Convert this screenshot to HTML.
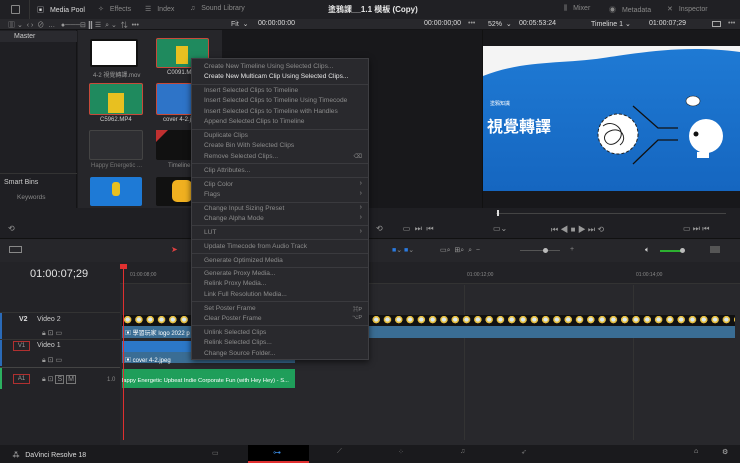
<!DOCTYPE html>
<html><head><meta charset="utf-8"><style>
*{margin:0;padding:0;box-sizing:border-box}
body{width:740px;height:463px;overflow:hidden;background:#1c1c1f;font-family:"Liberation Sans","Noto Sans CJK TC",sans-serif;color:#c8c8c8;position:relative;font-size:7px}
.a{position:absolute}
.t{position:absolute;white-space:nowrap}
.mi{position:absolute;left:12px;white-space:nowrap;color:#8c8c8c;font-size:6.6px}
.sep{position:absolute;left:0;right:0;height:1px;background:#3a3a3e}
.arr{position:absolute;right:6px;color:#8c8c8c;font-size:7px}
.th{position:absolute;border-radius:2px}
.lab{position:absolute;font-size:6px;color:#9a9a9a;white-space:nowrap}
</style></head><body>
<div class="a" style="left:0;top:0;width:740px;height:19px;background:#202024"></div>
<div class="a" style="left:11px;top:5px;width:9px;height:9px;border:1px solid #888;border-radius:1px"></div>
<div class="a" style="left:29px;top:0;width:1px;height:19px;background:#333"></div>
<div class="t" style="left:37px;top:5px;color:#ddd">▣ <span style="margin-left:4px">Media Pool</span></div>
<div class="t" style="left:98px;top:5px;color:#888">✧ <span style="margin-left:4px">Effects</span></div>
<div class="t" style="left:145px;top:5px;color:#888">☰ <span style="margin-left:4px">Index</span></div>
<div class="t" style="left:190px;top:5px;color:#888">♫ <span style="margin-left:4px">Sound Library</span></div>
<div class="t" style="left:328px;top:4px;color:#e8e8e8;font-size:8px;font-weight:bold">塗鴉課__1.1 模板 (Copy)</div>
<div class="t" style="left:564px;top:5px;color:#888">⫼ <span style="margin-left:4px">Mixer</span></div>
<div class="t" style="left:609px;top:5px;color:#888">◉ <span style="margin-left:4px">Metadata</span></div>
<div class="t" style="left:667px;top:5px;color:#888">✕ <span style="margin-left:4px">Inspector</span></div>
<div class="a" style="left:0;top:19px;width:740px;height:11px;background:#28282c;border-bottom:1px solid #141416"></div>
<div class="t" style="left:8px;top:20px;color:#999">▥ ⌄ &nbsp;‹ › &nbsp;⊘ &nbsp;…&nbsp;&nbsp;&nbsp;●───⊟ <b style="color:#ddd">⣿</b> ☰ &nbsp;⌕ ⌄ &nbsp;⇅ &nbsp;•••</div>
<div class="t" style="left:231px;top:20px;color:#ccc">Fit &nbsp;⌄</div>
<div class="t" style="left:258px;top:20px;color:#ddd">00:00:00:00</div>
<div class="t" style="left:424px;top:20px;color:#ddd">00:00:00;00</div>
<div class="t" style="left:468px;top:20px;color:#999">•••</div>
<div class="t" style="left:488px;top:20px;color:#ddd">52% &nbsp;⌄</div>
<div class="t" style="left:519px;top:20px;color:#ddd">00:05:53:24</div>
<div class="t" style="left:591px;top:20px;color:#ddd">Timeline 1 ⌄</div>
<div class="t" style="left:649px;top:20px;color:#ddd">01:00:07;29</div>
<div class="a" style="left:712px;top:21px;width:9px;height:6px;border:1px solid #aaa"></div>
<div class="t" style="left:728px;top:20px;color:#999">•••</div>
<div class="a" style="left:0;top:30px;width:77px;height:205px;background:#1f1f23;border-right:1px solid #141416"></div>
<div class="a" style="left:0;top:31px;width:77px;height:11px;background:#2a2a2f"></div>
<div class="t" style="left:14px;top:33px;color:#ccc">Master</div>
<div class="a" style="left:0;top:173px;width:77px;height:1px;background:#333"></div>
<div class="t" style="left:4px;top:179px;color:#ccc">Smart Bins</div>
<div class="t" style="left:17px;top:194px;color:#888;font-size:6.5px">Keywords</div>
<div class="a" style="left:78px;top:30px;width:144px;height:205px;background:#26262a"></div>
<div class="th" style="left:90px;top:39px;width:48px;height:28px;background:#fff;border:2px solid #111"></div>
<div class="lab" style="left:93px;top:70px">4-2 視覺轉譯.mov</div>
<div class="th" style="left:156px;top:38px;width:53px;height:30px;background:#1f8a5e;border:1.5px solid #c84a3a"></div>
<div class="a" style="left:176px;top:46px;width:12px;height:18px;background:#e8c020"></div>
<div class="lab" style="left:167px;top:70px;color:#ccc">C0091.M</div>
<div class="th" style="left:89px;top:83px;width:54px;height:32px;background:#1f8a5e;border:1.5px solid #c84a3a"></div>
<div class="a" style="left:108px;top:93px;width:16px;height:20px;background:#e8c020"></div>
<div class="lab" style="left:100px;top:117px;color:#ccc">C5962.MP4</div>
<div class="th" style="left:156px;top:83px;width:40px;height:32px;background:#2e74c8;border:1.5px solid #c84a3a"></div>
<div class="lab" style="left:163px;top:117px;color:#ccc">cover 4-2.j</div>
<div class="th" style="left:89px;top:130px;width:54px;height:30px;background:#2e2e32;border:1px solid #444"></div>
<div class="lab" style="left:91px;top:163px;color:#777">Happy Energetic ...</div>
<div class="th" style="left:156px;top:130px;width:40px;height:30px;background:#111"></div>
<div class="a" style="left:156px;top:130px;width:0;height:0;border-top:12px solid #c03030;border-right:12px solid transparent"></div>
<div class="lab" style="left:168px;top:163px;color:#888">Timeline</div>
<div class="th" style="left:90px;top:177px;width:52px;height:29px;background:#1e7ad6"></div>
<div class="a" style="left:112px;top:182px;width:8px;height:14px;background:#e8c020;border-radius:3px"></div>
<div class="lab" style="left:92px;top:209px;color:#888">塗鴉片頭影片.mov</div>
<div class="th" style="left:156px;top:177px;width:40px;height:29px;background:#111"></div>
<div class="a" style="left:172px;top:180px;width:20px;height:22px;background:#f0b020;border-radius:5px"></div>
<div class="lab" style="left:156px;top:209px;color:#888">學習玩家 logo</div>
<div class="a" style="left:222px;top:30px;width:260px;height:178px;background:#18181b"></div>
<div class="a" style="left:482px;top:30px;width:258px;height:178px;background:#18181b;border-left:1px solid #111"></div>
<div class="a" style="left:483px;top:46px;width:257px;height:145px;background:linear-gradient(#1f7ad4,#1566c0);overflow:hidden">
 <svg class="a" style="left:0;top:0" width="257" height="145"><path d="M0 0H257V6C200 -2 150 8 120 12C80 18 40 14 0 30Z" fill="#f4f4f4"/>
 <circle cx="135" cy="88" r="20" fill="#fff" stroke="#222" stroke-width="1" stroke-dasharray="3 2"/>
 <path d="M120 80c10-8 25 5 15 15s-20-5-8-10 18 8 10 14" fill="none" stroke="#222" stroke-width="1"/>
 <path d="M150 60L175 82H195M150 118L175 94H195" stroke="#111" stroke-width="1.3" fill="none"/>
 <circle cx="223" cy="90" r="17" fill="#fff"/><circle cx="213" cy="88" r="2.5" fill="#111"/>
 <ellipse cx="210" cy="55" rx="7" ry="5" fill="#fff" stroke="#222" stroke-width=".6"/>
 <rect x="214" y="106" width="12" height="6" fill="#fff"/></svg>
 <div class="t" style="left:7px;top:54px;color:#fff;font-size:5px">塗鴉知識</div>
 <div class="t" style="left:4px;top:67px;color:#fff;font-size:16px;font-weight:bold">視覺轉譯</div>
</div>
<div class="a" style="left:0;top:208px;width:740px;height:30px;background:#1f1f23"></div>
<div class="a" style="left:496px;top:213px;width:230px;height:1px;background:#444"></div>
<div class="a" style="left:497px;top:210px;width:2px;height:6px;background:#ddd"></div>
<div class="a" style="left:222px;top:213px;width:78px;height:1px;background:#444"></div>
<div class="t" style="left:8px;top:224px;color:#999;font-size:8px">⟲</div>
<div class="t" style="left:376px;top:224px;color:#999;font-size:8px">⟲ &nbsp;&nbsp;&nbsp;&nbsp;&nbsp;&nbsp;&nbsp;&nbsp;▭ &nbsp;⏭ &nbsp;⏮</div>
<div class="t" style="left:493px;top:224px;color:#999;font-size:8px">▭⌄</div>
<div class="t" style="left:551px;top:224px;color:#999;font-size:8px">⏮ ◀ ■ ▶ ⏭ ⟲</div>
<div class="t" style="left:683px;top:224px;color:#999;font-size:8px">▭ ⏭ ⏮</div>
<div class="a" style="left:0;top:238px;width:740px;height:24px;background:#26262a;border-top:1px solid #111"></div>
<div class="a" style="left:9px;top:246px;width:13px;height:7px;border:1px solid #888"></div>
<div class="t" style="left:171px;top:245px;color:#e04040;font-size:8px">➤</div>
<div class="t" style="left:392px;top:246px;color:#2a7ae0;font-size:7px">■<span style="color:#888">⌄</span> ■<span style="color:#888">⌄</span></div>
<div class="t" style="left:440px;top:246px;color:#999">▭⌕ &nbsp;⊞⌕ &nbsp;⌕ &nbsp;−</div>
<div class="a" style="left:520px;top:250px;width:40px;height:1px;background:#555"></div>
<div class="a" style="left:543px;top:248px;width:5px;height:5px;background:#bbb;border-radius:50%"></div>
<div class="t" style="left:570px;top:246px;color:#888">+</div>
<div class="t" style="left:645px;top:245px;color:#ccc;font-size:8px">🔈︎</div>
<div class="a" style="left:660px;top:250px;width:22px;height:2px;background:#2cb030"></div>
<div class="a" style="left:680px;top:248px;width:5px;height:5px;background:#bbb;border-radius:50%"></div>
<div class="a" style="left:710px;top:246px;width:10px;height:7px;background:#555"></div>
<div class="a" style="left:0;top:262px;width:120px;height:183px;background:#232327"></div>
<div class="t" style="left:30px;top:268px;color:#e4e4e4;font-size:11px">01:00:07;29</div>
<div class="a" style="left:0;top:312px;width:120px;height:1px;background:#333"></div>
<div class="a" style="left:0;top:313px;width:2px;height:53px;background:#2a6ab8"></div>
<div class="t" style="left:19px;top:316px;color:#ddd;font-weight:bold">V2</div>
<div class="t" style="left:37px;top:316px;color:#ccc">Video 2</div>
<div class="t" style="left:42px;top:329px;color:#999">🔒︎ ⊡ ▭</div>
<div class="a" style="left:0;top:339px;width:120px;height:1px;background:#333"></div>
<div class="a" style="left:13px;top:341px;width:17px;height:10px;border:1px solid #b03030;color:#999;font-size:6px;text-align:center;line-height:8px">V1</div>
<div class="t" style="left:37px;top:342px;color:#ccc">Video 1</div>
<div class="t" style="left:42px;top:356px;color:#999">🔒︎ ⊡ ▭</div>
<div class="a" style="left:0;top:367px;width:740px;height:1px;background:#444"></div>
<div class="a" style="left:0;top:368px;width:2px;height:21px;background:#2cb060"></div>
<div class="a" style="left:13px;top:374px;width:17px;height:10px;border:1px solid #b03030;color:#999;font-size:6px;text-align:center;line-height:8px">A1</div>
<div class="t" style="left:42px;top:375px;color:#999">🔒︎ ⊡ <span style="border:1px solid #777;padding:0 1px">S</span> <span style="border:1px solid #777;padding:0 1px">M</span></div>
<div class="t" style="left:107px;top:377px;color:#888;font-size:6px">1.0</div>
<div class="a" style="left:120px;top:262px;width:620px;height:183px;background:#28282c"></div>
<div class="a" style="left:120px;top:262px;width:620px;height:22px;background:#222226;border-bottom:1px solid #333"></div>
<div class="t" style="left:130px;top:272px;color:#888;font-size:5px">01:00:08;00</div>
<div class="t" style="left:467px;top:272px;color:#888;font-size:5px">01:00:12;00</div>
<div class="t" style="left:636px;top:272px;color:#888;font-size:5px">01:00:14;00</div>
<div class="a" style="left:464px;top:285px;width:1px;height:155px;background:#333"></div>
<div class="a" style="left:633px;top:285px;width:1px;height:155px;background:#333"></div>
<div class="a" style="left:122px;top:315px;width:613px;height:11px;background:#111"></div>
<div class="a" style="left:122px;top:316px;width:613px;height:9px;background:radial-gradient(circle at 50% 40%,#d8e8f0 0 2px,#e8c040 2.2px 3.6px,transparent 3.8px);background-size:11.3px 9px"></div>
<div class="a" style="left:122px;top:326px;width:613px;height:12px;background:#3a6d94"></div>
<div class="t" style="left:125px;top:328px;color:#fff;font-size:6px">▣ 學習玩家 logo 2022 p</div>
<div class="a" style="left:122px;top:341px;width:173px;height:11px;background:#2c78c8"></div>
<div class="a" style="left:122px;top:352px;width:173px;height:11px;background:#3a6d94"></div>
<div class="t" style="left:125px;top:355px;color:#fff;font-size:6px">▣ cover 4-2.jpeg</div>
<div class="a" style="left:122px;top:369px;width:173px;height:19px;background:#1f9e5a"></div>
<div class="t" style="left:122px;top:378px;color:#fff;font-size:5.8px">lappy Energetic Upbeat Indie Corporate Fun (with Hey Hey) - S...</div>
<div class="a" style="left:123px;top:265px;width:1px;height:175px;background:#e03030"></div>
<div class="a" style="left:120px;top:264px;width:7px;height:5px;background:#e03030"></div>
<div class="a" style="left:0;top:445px;width:740px;height:18px;background:#1a1a1d"></div>
<div class="t" style="left:12px;top:449px;color:#ddd;font-size:8px">⁂ <span style="font-size:7px;margin-left:3px">DaVinci Resolve 18</span></div>
<div class="a" style="left:248px;top:445px;width:61px;height:18px;background:#000"></div>
<div class="a" style="left:248px;top:461px;width:61px;height:2px;background:#e03030"></div>
<div class="t" style="left:212px;top:449px;color:#777">▭</div>
<div class="t" style="left:273px;top:448px;color:#3a8ae0;font-size:8px">⊶</div>
<div class="t" style="left:337px;top:448px;color:#777">⟋</div>
<div class="t" style="left:398px;top:448px;color:#777">⁘</div>
<div class="t" style="left:460px;top:448px;color:#777">♫</div>
<div class="t" style="left:521px;top:448px;color:#777">➶</div>
<div class="t" style="left:694px;top:448px;color:#bbb">⌂</div>
<div class="t" style="left:722px;top:448px;color:#bbb">⚙</div>
<div class="a" style="left:191px;top:58px;width:178px;height:302px;background:#29292d;border:1px solid #3e3e42;box-shadow:0 2px 6px rgba(0,0,0,.6)">
 <div class="mi" style="top:4px">Create New Timeline Using Selected Clips...</div>
 <div class="mi" style="top:14px;color:#e8e8e8">Create New Multicam Clip Using Selected Clips...</div>
 <div class="sep" style="top:25px"></div>
 <div class="mi" style="top:28px">Insert Selected Clips to Timeline</div>
 <div class="mi" style="top:38px">Insert Selected Clips to Timeline Using Timecode</div>
 <div class="mi" style="top:49px">Insert Selected Clips to Timeline with Handles</div>
 <div class="mi" style="top:59px">Append Selected Clips to Timeline</div>
 <div class="sep" style="top:70px"></div>
 <div class="mi" style="top:73px">Duplicate Clips</div>
 <div class="mi" style="top:83px">Create Bin With Selected Clips</div>
 <div class="mi" style="top:94px">Remove Selected Clips...</div>
 <div class="arr" style="top:94px;font-size:6px">⌫</div>
 <div class="sep" style="top:104px"></div>
 <div class="mi" style="top:108px">Clip Attributes...</div>
 <div class="sep" style="top:118px"></div>
 <div class="mi" style="top:122px">Clip Color</div><div class="arr" style="top:121px">›</div>
 <div class="mi" style="top:132px">Flags</div><div class="arr" style="top:131px">›</div>
 <div class="sep" style="top:143px"></div>
 <div class="mi" style="top:146px">Change Input Sizing Preset</div><div class="arr" style="top:145px">›</div>
 <div class="mi" style="top:156px">Change Alpha Mode</div><div class="arr" style="top:155px">›</div>
 <div class="sep" style="top:166px"></div>
 <div class="mi" style="top:170px">LUT</div><div class="arr" style="top:169px">›</div>
 <div class="sep" style="top:180px"></div>
 <div class="mi" style="top:184px">Update Timecode from Audio Track</div>
 <div class="sep" style="top:194px"></div>
 <div class="mi" style="top:198px">Generate Optimized Media</div>
 <div class="sep" style="top:208px"></div>
 <div class="mi" style="top:211px">Generate Proxy Media...</div>
 <div class="mi" style="top:221px">Relink Proxy Media...</div>
 <div class="mi" style="top:232px">Link Full Resolution Media...</div>
 <div class="sep" style="top:242px"></div>
 <div class="mi" style="top:246px">Set Poster Frame</div><div class="arr" style="top:246px;font-size:5.5px">⌘P</div>
 <div class="mi" style="top:256px">Clear Poster Frame</div><div class="arr" style="top:256px;font-size:5.5px">⌥P</div>
 <div class="sep" style="top:266px"></div>
 <div class="mi" style="top:270px">Unlink Selected Clips</div>
 <div class="mi" style="top:280px">Relink Selected Clips...</div>
 <div class="mi" style="top:291px">Change Source Folder...</div>
</div>
</body></html>
